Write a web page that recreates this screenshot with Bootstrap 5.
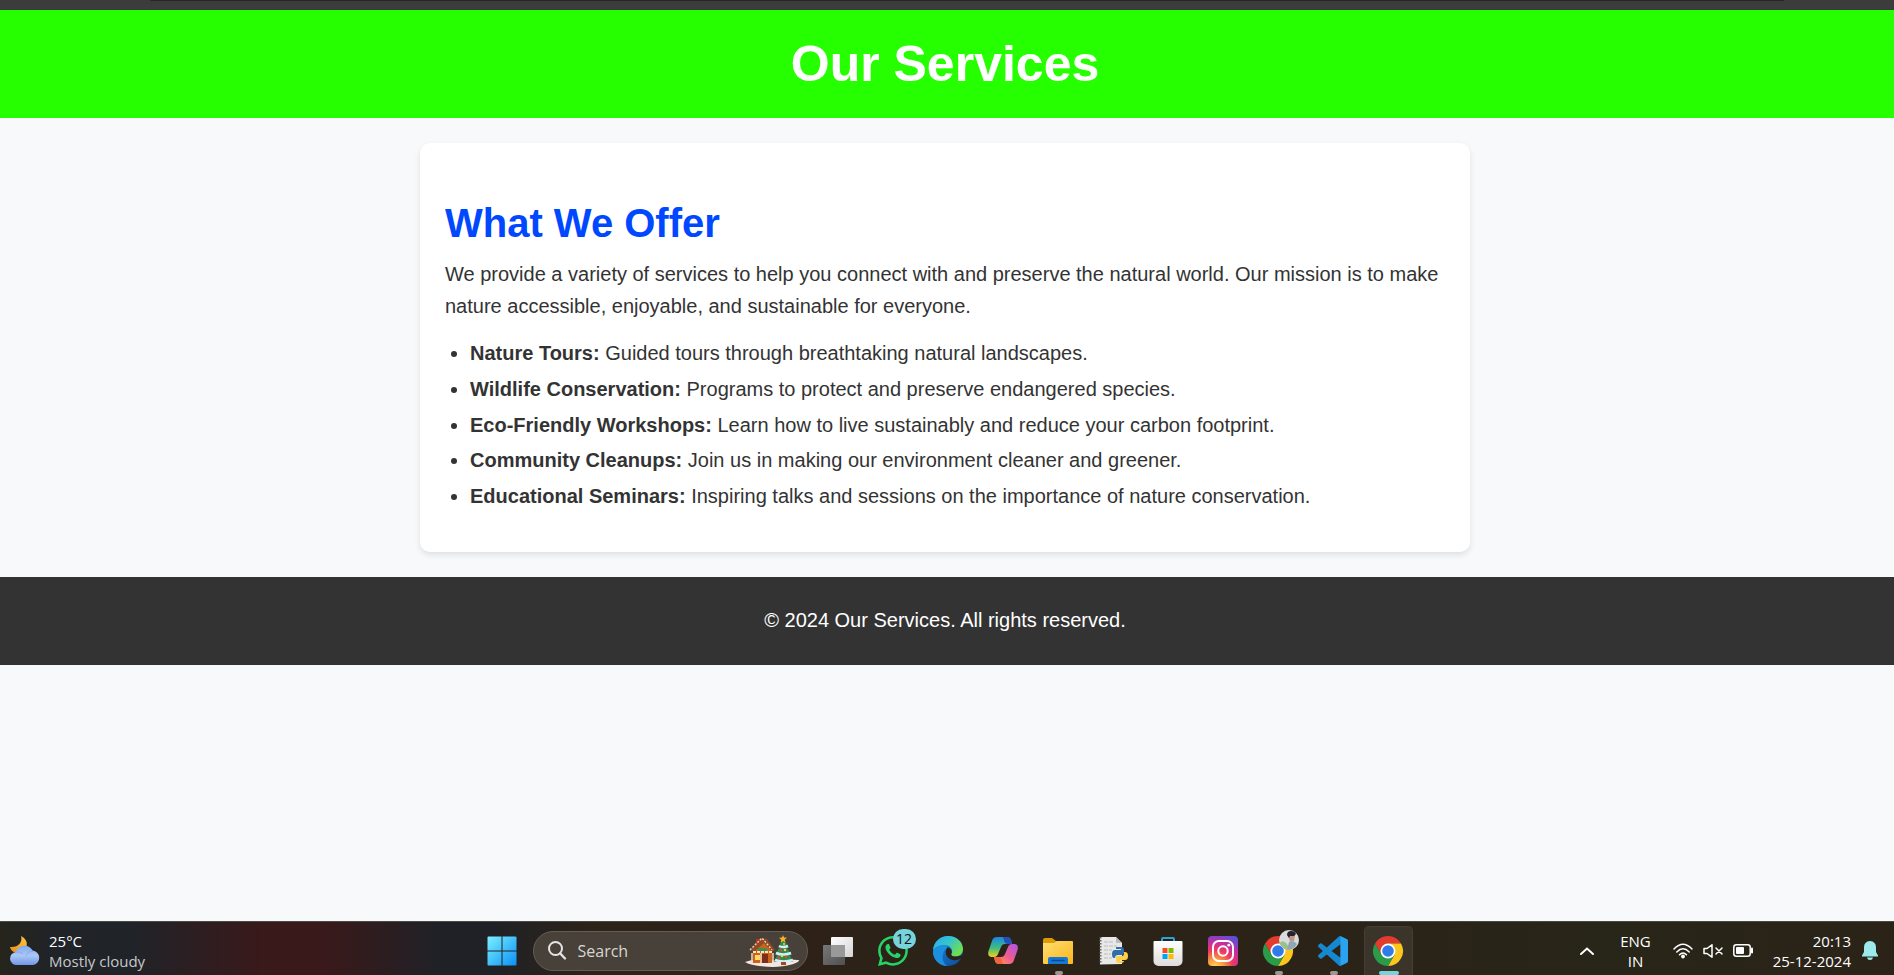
<!DOCTYPE html>
<html lang="en">
<head>
<meta charset="utf-8">
<meta name="viewport" content="width=device-width, initial-scale=1">
<title>Our Services</title>
<link href="https://cdn.jsdelivr.net/npm/bootstrap@5.3.0/dist/css/bootstrap.min.css" rel="stylesheet">
<style>
body{font-family:"Liberation Sans",Arial,sans-serif;font-size:20px;line-height:32px;color:#333;background:#f8f9fb}
.browser-edge{height:10px;background:#3c3c3c}
.browser-edge span{display:block;height:1px;margin:0 110px 0 150px;background:#262626}
.site-header{background:#26ff00;padding:25px 4px 25px 0;color:#fff}
.site-header h1{font-size:50px;line-height:58px;font-weight:700}
.page-main{padding:25px 4px 25px 0}
.offer{max-width:1050px;padding:50px 25px 40px;border-radius:10px;box-shadow:0 3px 6px rgba(0,0,0,.1)}
.offer h2{font-size:40px;line-height:60px;font-weight:700;color:#0048ff;margin-bottom:5px}
.offer p{margin-bottom:15px}
.offer ul{padding-left:25px;min-height:175px}
.site-footer{background:#333;color:#fff;padding:27px 4px 29px 0}
.taskbar{display:grid;grid-template-columns:1fr auto 1fr;min-height:54px;padding:4px 4px 0 0;font-family:"Open Sans","Noto Sans",sans-serif;font-size:15px;line-height:20px;color:#fff;border-top:1px solid #4a4a44;
 background:linear-gradient(90deg,#25251c 0,#202328 3%,#202328 7%,#3a191a 14%,#3a191a 17%,#202126 23%,#202126 26%,#2c2319 31%,#2e2118 42%,#2b2318 48%,#2b2318 70%,#282519 85%,#2b2318 100%)}
.taskbar svg{display:block;flex:none;overflow:visible}
.tbtn{border:0;background:none;padding:0;color:inherit;position:relative}
.launch{width:55px;display:flex;align-items:center;justify-content:center}
.launch.running::after,.launch.active::after{content:"";position:absolute;bottom:0;left:24px;width:8px;height:4px;border-radius:3px;background:#9c9790}
.launch.active::after{left:18px;width:20px;background:#76d4dc}
.launch.active::before{content:"";position:absolute;inset:0 3px;border:1px solid #443e34;border-bottom:0;border-radius:5px 5px 0 0;background:#3a342a}
.launch svg{position:relative}
.searchbox{width:275px;height:40px;border-radius:20px;background:#484139;border:1px solid #645d55;padding:0 8px 0 14px;margin:0 3px;gap:12px}
.searchbox input{width:150px;background:none;border:0;outline:0;color:#ddd;font-size:16px;padding:0}
.searchbox input::placeholder{color:#d8d6d3;opacity:1}
.count-badge{position:absolute;top:3px;left:27px;width:23px;height:20px;border-radius:10px;background:#76d4dc;color:#111;font-size:14px;line-height:20px}
.muted{color:#c8c8c8}
.weather{padding-left:10px;gap:9px}
.tray{padding-right:12px}
.lang{margin:0 22px 0 26px}
.tray-icons{gap:10px;margin-right:20px}
.bell{margin-left:11px}
</style>
</head>
<body class="d-flex flex-column min-vh-100">
<div class="browser-edge"><span></span></div>
<header class="site-header text-center"><h1 class="m-0">Our Services</h1></header>
<main class="page-main">
<section class="offer bg-white mx-auto">
<h2 class="mt-0">What We Offer</h2>
<p>We provide a variety of services to help you connect with and preserve the natural world. Our mission is to make nature accessible, enjoyable, and sustainable for everyone.</p>
<ul class="mb-0 d-flex flex-column justify-content-between">
<li><strong>Nature Tours:</strong> Guided tours through breathtaking natural landscapes.</li>
<li><strong>Wildlife Conservation:</strong> Programs to protect and preserve endangered species.</li>
<li><strong>Eco-Friendly Workshops:</strong> Learn how to live sustainably and reduce your carbon footprint.</li>
<li><strong>Community Cleanups:</strong> Join us in making our environment cleaner and greener.</li>
<li><strong>Educational Seminars:</strong> Inspiring talks and sessions on the importance of nature conservation.</li>
</ul>
</section>
</main>
<footer class="site-footer text-center"><p class="m-0">© 2024 Our Services. All rights reserved.</p></footer>

<nav class="taskbar mt-auto" aria-label="Taskbar">
<svg width="0" height="0" class="position-absolute" aria-hidden="true">
<defs>
<linearGradient id="gWin" x1="0" y1="0" x2="1" y2="1"><stop offset="0" stop-color="#7bf0ff"/><stop offset="1" stop-color="#0a90f5"/></linearGradient>
<linearGradient id="gCloud" x1="0" y1="0" x2="0" y2="1"><stop offset="0" stop-color="#7fa8ec"/><stop offset=".5" stop-color="#a9c8f8"/><stop offset="1" stop-color="#7396e6"/></linearGradient>
<linearGradient id="gMoon" x1="0" y1="1" x2="1" y2="0"><stop offset="0" stop-color="#f08a1c"/><stop offset="1" stop-color="#fcc83c"/></linearGradient>
<linearGradient id="gEdgeTop" x1="0" y1="0" x2="1" y2=".6"><stop offset="0" stop-color="#2aa9e8"/><stop offset=".5" stop-color="#35c4cf"/><stop offset="1" stop-color="#6fe04a"/></linearGradient>
<linearGradient id="gEdgeLow" x1="0" y1="0" x2="1" y2="1"><stop offset="0" stop-color="#1b87dc"/><stop offset="1" stop-color="#0c4b9c"/></linearGradient>
<linearGradient id="gCopA" x1="0" y1="0" x2="0" y2="1"><stop offset="0" stop-color="#1b86e8"/><stop offset=".55" stop-color="#3fbf7c"/><stop offset="1" stop-color="#f2cf1c"/></linearGradient>
<linearGradient id="gCopB" x1="1" y1="0" x2="0" y2="1"><stop offset="0" stop-color="#a857e8"/><stop offset=".5" stop-color="#ee5a92"/><stop offset="1" stop-color="#ffa24a"/></linearGradient>
<linearGradient id="gFold" x1="0" y1="0" x2="1" y2="1"><stop offset="0" stop-color="#ffde72"/><stop offset="1" stop-color="#fbb61c"/></linearGradient>
<linearGradient id="gStore" x1="0" y1="0" x2="0" y2="1"><stop offset="0" stop-color="#fff"/><stop offset="1" stop-color="#dcdcdc"/></linearGradient>
<radialGradient id="gInsta" cx=".25" cy="1.05" r="1.15"><stop offset="0" stop-color="#ffd765"/><stop offset=".25" stop-color="#fb9a3c"/><stop offset=".5" stop-color="#ee3a5e"/><stop offset=".75" stop-color="#c22fa4"/><stop offset="1" stop-color="#5a50d8"/></radialGradient>
<linearGradient id="gGrey" x1="0" y1="0" x2="1" y2="1"><stop offset="0" stop-color="#fff"/><stop offset="1" stop-color="#d4d4d4"/></linearGradient>
<linearGradient id="gPane" x1="0" y1="0" x2="1" y2="1"><stop offset="0" stop-color="#777"/><stop offset="1" stop-color="#505050"/></linearGradient>
<g id="chrome">
<path d="M2 7.5A15 15 0 0 1 28 7.5H15L8.5 18.75Z" fill="#e33b2e"/>
<path d="M28 7.5A15 15 0 0 1 15 30L21.5 18.75 15 7.5Z" fill="#fcc61c"/>
<path d="M2 7.5A15 15 0 0 0 15 30L21.5 18.75H8.5Z" fill="#2a9b48"/>
<circle cx="15" cy="15" r="7.5" fill="#fff"/><circle cx="15" cy="15" r="5.8" fill="#2f7bea"/>
</g>
</defs>
</svg>

<button class="tbtn weather d-flex align-items-center text-start">
<svg width="30" height="30" viewBox="0 0 30 30" aria-hidden="true"><path d="M11 0C13 6 8 12 0 11C1 17 10 19 14 14.5C19 9 17 3 11 0Z" fill="url(#gMoon)"/><path d="M7 29a6.500 6.500 0 0 1-1-13A9 9 0 0 1 22.500 14.500A7.300 7.300 0 0 1 23 29Z" fill="url(#gCloud)"/><path d="M6 16q4-1 7 2m3 2q2-5 7-5" fill="none" stroke="#84a9ec"/></svg>
<span><span class="d-block">25°C</span><span class="d-block muted">Mostly cloudy</span></span>
</button>

<div class="d-flex align-items-stretch">
<button class="tbtn launch" aria-label="Start"><svg width="30" height="30" viewBox="0 0 30 30"><path d="M.5 1.500a1 1 0 0 1 1-1H14.500V14.500H.5ZM15.500.5H28.500a1 1 0 0 1 1 1V14.500H15.500ZM.5 15.500H14.500V29.500H1.500a1 1 0 0 1-1-1ZM15.500 15.500H29.500V28.500a1 1 0 0 1-1 1H15.500Z" fill="url(#gWin)"/></svg></button>
<div class="searchbox d-flex align-items-center align-self-center">
<svg width="18" height="19" viewBox="0 0 18 19" aria-hidden="true"><circle cx="7.500" cy="7.500" r="6.500" fill="none" stroke="#e4e4e4" stroke-width="2"/><path d="M12.300 12.500L17 17.500" stroke="#e4e4e4" stroke-width="2.400" stroke-linecap="round"/></svg>
<input type="text" placeholder="Search" aria-label="Search">
<svg class="ms-auto" width="54" height="32" viewBox="0 0 54 32" aria-hidden="true">
<path d="M0 27Q8 24 16 25T40 25T54 26Q48 31 28 32Q6 31 0 27Z" fill="#f3e6e4"/>
<path d="M8 14L17 5L27 15V28H8Z" fill="#c9641f"/><path d="M11 4h4v7h-4z" fill="#c42b1c"/>
<path d="M5 15L17 3L22 4L30 15L27 17L19 8L9 17Z" fill="#8d4a25"/><path d="M5 15L17 3L27 15" stroke="#f2c9a4" stroke-width="1.500" stroke-dasharray="2 1.500" fill="none"/>
<path d="M8 17H27" stroke="#f8dfc6" stroke-width="2" stroke-dasharray="3 1"/><path d="M13 13h9v3h-9z" fill="#3f8f4c"/>
<path d="M10 20h5v5h-5z" fill="#ffd860"/><path d="M17 19h6v9h-6z" fill="#7c2f16"/><path d="M7 18v10M16 18v10M28 18v10" stroke="#f4d7c4" stroke-width="1.500"/>
<path d="M38 3L44 13H42L47 20H45L48 27H29L32 20H30L34 13H33Z" fill="#2f8a4c"/>
<path d="M34 11Q38 13 43 11M31 18Q38 21 46 18M30 25Q38 28 48 25" stroke="#d7ecf8" stroke-width="2.500" fill="none"/>
<path d="M38 0l1 2.500 3 .3-2.300 1.900.8 3L38 6l-2.500 1.700.8-3L34 2.800l3-.3Z" fill="#f6b52c"/>
<g fill="#e0473c"><circle cx="36" cy="15" r="1.300"/><circle cx="41" cy="22" r="1.300"/><circle cx="34" cy="23" r="1.300"/></g><g fill="#f8d24c"><circle cx="40" cy="15" r="1.200"/><circle cx="37" cy="21" r="1.200"/><circle cx="39" cy="9" r="1"/></g><path d="M36 27h5v3h-5z" fill="#9c4a20"/>
</svg>
</div>
<button class="tbtn launch" aria-label="Task view"><svg width="30" height="30" viewBox="0 0 30 30"><rect x="8" y="1" width="22" height="20" rx="1" fill="url(#gGrey)"/><rect x="0" y="9" width="22" height="20" rx="1" fill="url(#gPane)"/><path d="M8 9H22V21H8Z" fill="#999"/></svg></button>
<button class="tbtn launch" aria-label="WhatsApp"><svg width="30" height="30" viewBox="0 0 16 16"><path fill="#25d366" d="M13.601 2.326A7.854 7.854 0 0 0 7.994 0C3.627 0 .068 3.558.064 7.926c0 1.399.366 2.760 1.057 3.965L0 16l4.204-1.102a7.933 7.933 0 0 0 3.790.965h.004c4.368 0 7.926-3.558 7.930-7.930A7.898 7.898 0 0 0 13.600 2.326zM7.994 14.521a6.573 6.573 0 0 1-3.356-.920l-.240-.144-2.494.654.666-2.433-.156-.251a6.560 6.560 0 0 1-1.007-3.505c0-3.626 2.957-6.584 6.591-6.584a6.560 6.560 0 0 1 4.660 1.931 6.557 6.557 0 0 1 1.928 4.660c-.004 3.639-2.961 6.592-6.592 6.592zm3.615-4.934c-.197-.099-1.170-.578-1.353-.646-.182-.065-.315-.099-.445.099-.133.197-.513.646-.627.775-.114.133-.232.148-.430.050-.197-.100-.836-.308-1.592-.985-.590-.525-.985-1.175-1.103-1.372-.114-.198-.011-.304.088-.403.087-.088.197-.232.296-.346.100-.114.133-.198.198-.330.065-.134.034-.248-.015-.347-.050-.099-.445-1.076-.612-1.470-.160-.389-.323-.335-.445-.340-.114-.007-.247-.007-.380-.007a.729.729 0 0 0-.529.247c-.182.198-.691.677-.691 1.654 0 .977.710 1.916.810 2.049.098.133 1.394 2.132 3.383 2.992.470.205.840.326 1.129.418.475.152.904.129 1.246.080.380-.058 1.171-.480 1.338-.943.164-.464.164-.860.114-.943-.049-.084-.182-.133-.380-.232z"/></svg><span class="count-badge">12</span></button>
<button class="tbtn launch" aria-label="Edge"><svg width="30" height="30" viewBox="0 0 30 30"><circle cx="15" cy="15" r="15" fill="url(#gEdgeLow)"/><path d="M0 14C1 5 8 0 15 0C24 0 30 6 30 13C30 18 26 20.500 22.500 20.500C19 20.500 17.500 19 18.500 17.500C20.500 14.500 18 9 11.500 9C6 9 1.500 12 0 14Z" fill="url(#gEdgeTop)"/><path d="M11.500 9C5.500 9 0 13 0 16C0 24 7 30 14 30C8 26 8 16 14.500 11.500C15 10.500 14 9 11.500 9Z" fill="#1d8fe0"/><path d="M14.500 11.500C12 14 11.500 21 18 23.500C22 25 26 23.500 28.500 22.300C29.500 22 30 22 30 21L31 17Q28 20.800 22.500 20.500C19 20.500 17.500 19 18.500 17.500C19.500 15 17.500 12 14.500 11.500Z" fill="#2b2318"/></svg></button>
<button class="tbtn launch" aria-label="Copilot"><svg width="30" height="30" viewBox="0 0 30 30"><path d="M9 1H19Q22 1 23 4L24 8H17Q14 8 13 11L10 18Q9 21 6 21H3Q-1 20 .5 15L4 5Q5 1 9 1Z" fill="url(#gCopA)"/><path d="M15 1H19Q22 1 23 4L24 8H20Q17 8 16.500 6Z" fill="#2350b8"/><path d="M21 28H11Q8 28 7 25L6 21H13Q16 21 17 18L20 11Q21 8 24 8H27Q31 9 29.500 14L26 24Q25 28 21 28Z" fill="url(#gCopB)"/><path d="M15 28H11Q8 28 7 25L6 21H10Q13 21 13.500 23Z" fill="#f4643c"/></svg></button>
<button class="tbtn launch running" aria-label="File Explorer"><svg width="30" height="30" viewBox="0 0 30 30"><path d="M0 4a2 2 0 0 1 2-2H9L13 5H14V10H0Z" fill="#dc9a08"/><path d="M0 7H11L14 5H29a1 1 0 0 1 1 1V27a1 1 0 0 1-1 1H1a1 1 0 0 1-1-1Z" fill="url(#gFold)"/><path d="M5 28V23a2 2 0 0 1 2-2H23a2 2 0 0 1 2 2V28Z" fill="#1478d4"/><path d="M9 24.500H21" stroke="#0a4a94" stroke-width="1.500" stroke-linecap="round"/></svg></button>
<button class="tbtn launch" aria-label="Python file"><svg width="30" height="30" viewBox="0 0 30 30"><path d="M2 1H18L24 7V28L2 28.500Z" fill="#e8e8e8"/><path d="M18 1V7H24Z" fill="#bbb"/><path d="M2.500 1V28" stroke="#666" stroke-width="2" stroke-dasharray="1.500 1.500"/><path d="M6 6H15M6 10H19M6 14H14M6 18H13M6 22H14" stroke="#bcbcbc" stroke-dasharray="4 1"/><path d="M18 11h5q3 0 3 3v3q0 2-2 2h-4q-3 0-3 3h-1q-2 0-2-4t3-4h6v-1h-5Z" fill="#2f6ea8"/><path d="M26 16h1q3 0 3 4t-3 4h-5v1h4q0 2-4 2t-4-2v-3q0-2 2-2h4q2 0 2-2Z" fill="#fdd045"/></svg></button>
<button class="tbtn launch" aria-label="Microsoft Store"><svg width="30" height="30" viewBox="0 0 30 30"><path d="M9 7V3a1 1 0 0 1 1-1H20a1 1 0 0 1 1 1V7" fill="none" stroke="#27a4dc" stroke-width="2"/><path d="M1.500 5H28.500a1 1 0 0 1 1 1V25a5 5 0 0 1-5 5H5.500a5 5 0 0 1-5-5V6a1 1 0 0 1 1-1Z" fill="url(#gStore)"/><path d="M9.500 12h5v5h-5z" fill="#f25022"/><path d="M15.500 12h5v5h-5z" fill="#7fba00"/><path d="M9.500 18h5v5h-5z" fill="#00a4ef"/><path d="M15.500 18h5v5h-5z" fill="#ffb900"/></svg></button>
<button class="tbtn launch" aria-label="Instagram"><svg width="30" height="30" viewBox="0 0 30 30"><rect width="30" height="30" rx="4" fill="url(#gInsta)"/><g fill="none" stroke="#fff" stroke-width="2"><rect x="5" y="5" width="20" height="20" rx="6"/><circle cx="15" cy="15" r="4.700"/></g><circle cx="20.800" cy="9.200" r="1.400" fill="#fff"/></svg></button>
<button class="tbtn launch running" aria-label="Chrome profile"><svg width="30" height="30" viewBox="0 0 30 30"><use href="#chrome"/><circle cx="26" cy="4" r="10" fill="#d9dcdc"/><path d="M16.500 7Q20 3 24 8L27 13.800A10 10 0 0 1 16.500 7Z" fill="#9cc08c"/><path d="M24 13.800L26 6Q30 3 34 8Q31 14 24 13.800Z" fill="#8fa6b6"/><path d="M25 0Q25-4 29-4T32 0L31 5H27Z" fill="#c4957f"/><path d="M24-1Q24-5 28-5T33-2L31 0H27L26 2Z" fill="#252330"/></svg></button>
<button class="tbtn launch running" aria-label="Visual Studio Code"><svg width="30" height="30" viewBox="0 0 24 24"><path fill="#1588d0" d="M23.150 2.587L18.210.210a1.494 1.494 0 0 0-1.705.290l-9.460 8.630-4.120-3.128a.999.999 0 0 0-1.276.057L.327 7.261A1 1 0 0 0 .326 8.740L3.899 12 .326 15.260a1 1 0 0 0 .001 1.479L1.650 17.940a.999.999 0 0 0 1.276.057l4.120-3.128 9.460 8.630a1.492 1.492 0 0 0 1.704.290l4.942-2.377A1.500 1.500 0 0 0 24 20.060V3.939a1.500 1.500 0 0 0-.850-1.352zm-5.146 14.861L10.826 12l7.178-5.448v10.896z"/><path d="M18 .15L23.150 2.587A1.500 1.500 0 0 1 24 3.939V20.060A1.500 1.500 0 0 1 23.150 21.400L18 23.850Z" fill="#2ba3f0"/></svg></button>
<button class="tbtn launch active" aria-label="Chrome"><svg width="30" height="30" viewBox="0 0 30 30"><use href="#chrome"/></svg></button>
</div>

<div class="tray d-flex align-items-center justify-content-end">
<button class="tbtn" aria-label="Show hidden icons"><svg width="14" height="8" viewBox="0 0 14 8"><path d="M1 7L7 1.500 13 7" fill="none" stroke="#fff" stroke-width="2" stroke-linecap="round"/></svg></button>
<button class="tbtn lang"><span class="d-block">ENG</span><span class="d-block">IN</span></button>
<button class="tbtn tray-icons d-flex align-items-center" aria-label="Network, sound and battery">
<svg width="20" height="16" viewBox="0 0 20 16"><g fill="none" stroke="#fff" stroke-width="1.500" stroke-linecap="round"><path d="M1 6Q10-3.500 19 6M3.800 9Q10 2.500 16.200 9M6.500 11.800Q10 8 13.500 11.800"/></g><circle cx="10" cy="13.500" r="1.900" fill="#fff"/></svg>
<svg width="20" height="14" viewBox="0 0 20 14"><g fill="none" stroke="#fff" stroke-width="1.500" stroke-linejoin="round" stroke-linecap="round"><path d="M1 4.500H4L9 .8V13.200L4 9.500H1Z"/><path d="M13 4L19 10M19 4L13 10"/></g></svg>
<svg width="20" height="13" viewBox="0 0 20 13"><rect x=".8" y=".8" width="16.400" height="11.400" rx="2.500" fill="none" stroke="#fff" stroke-width="1.500"/><rect x="3" y="3" width="8" height="7" rx="1" fill="#fff"/><path d="M19 4.500V8.500" stroke="#fff" stroke-width="2" stroke-linecap="round"/></svg>
</button>
<button class="tbtn text-end"><span class="d-block">20:13</span><span class="d-block">25-12-2024</span></button>
<button class="tbtn bell" aria-label="Notifications"><svg width="16" height="19" viewBox="0 0 16 19"><path d="M8 0Q14 .5 14 6.500V11L16 14.500V15.500H0V14.500L2 11V6.500Q2 .5 8 0ZM5 16.500H11Q10.500 19 8 19T5 16.500Z" fill="#9ceaec"/></svg></button>
</div>
</nav>
<script src="https://cdn.jsdelivr.net/npm/bootstrap@5.3.0/dist/js/bootstrap.bundle.min.js"></script>
</body>
</html>
